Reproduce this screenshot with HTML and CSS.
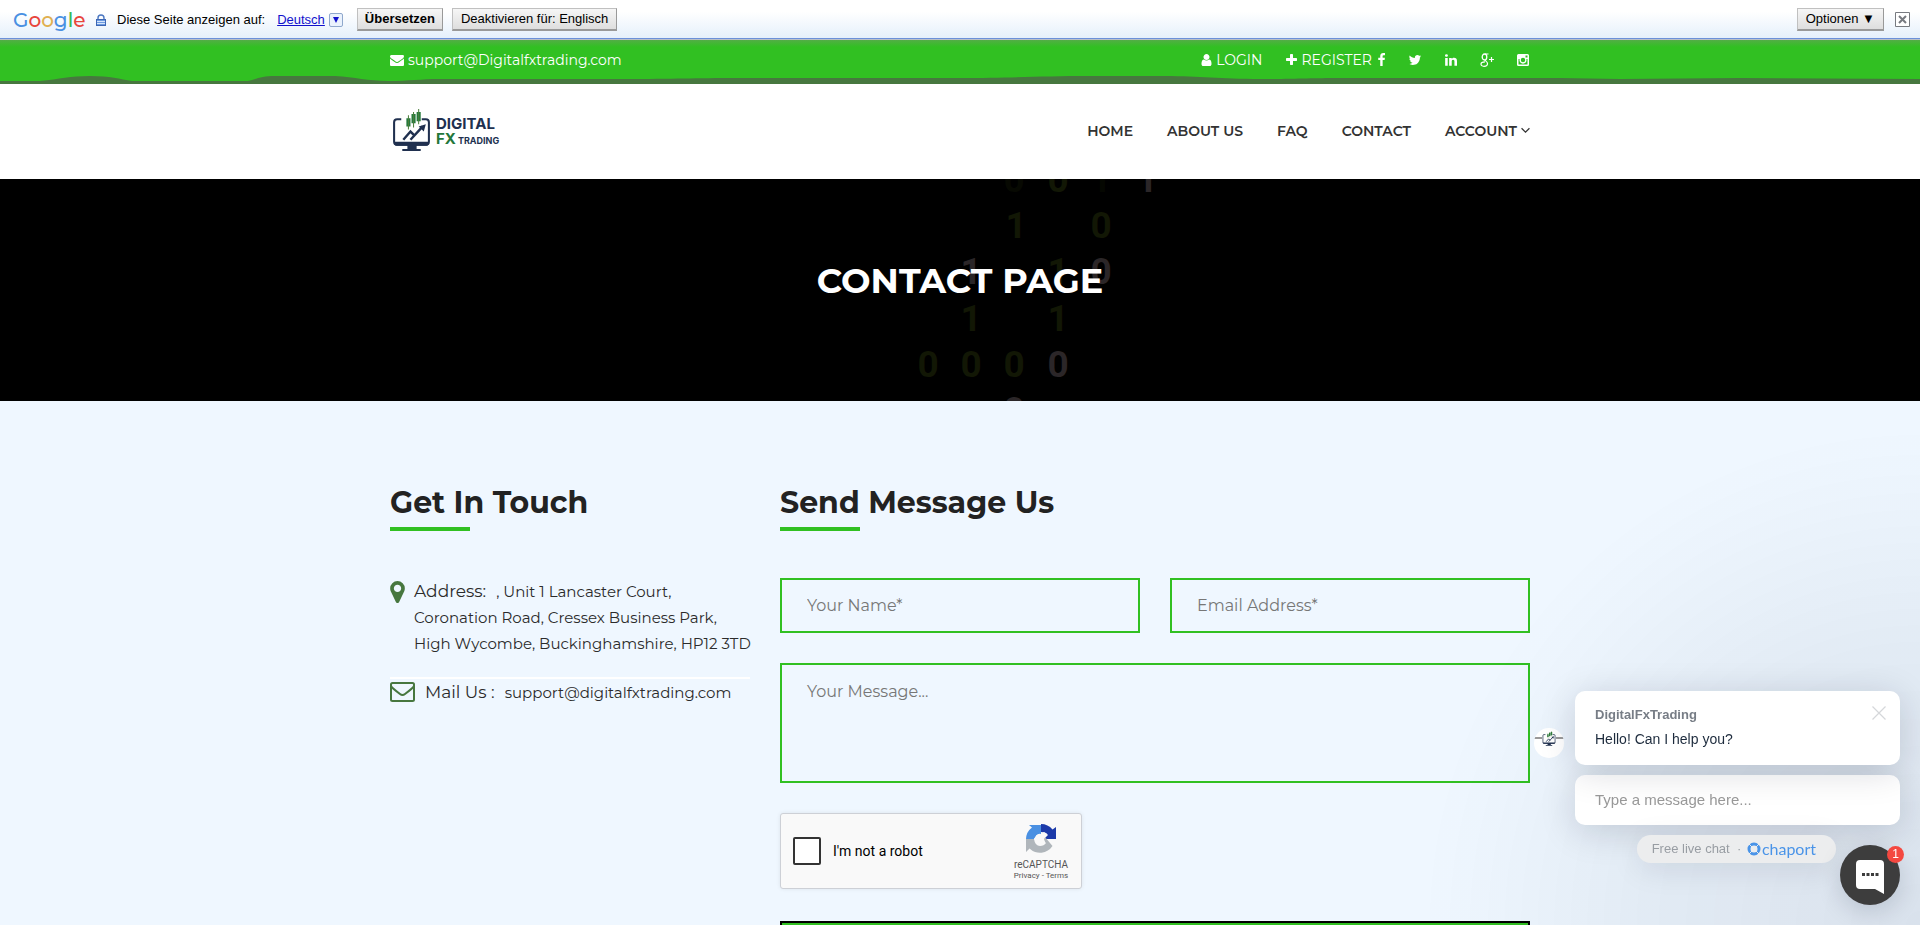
FILE: index.html
```html
<!DOCTYPE html>
<html lang="en">
<head>
<meta charset="utf-8">
<meta name="viewport" content="width=device-width, initial-scale=1">
<title>Contact - Digital FX Trading</title>
<link rel="stylesheet" href="styles.css">
</head>
<body>
<svg class="defs" aria-hidden="true">
  <symbol id="monitor" viewBox="0 0 38 42">
    <path d="M9 10H5a3 3 0 0 0-3 3v19a3 3 0 0 0 3 3h28a3 3 0 0 0 3-3V13a3 3 0 0 0-3-3h-4" fill="none" stroke="#20304f" stroke-width="2"/>
    <path d="M2 32h34v1q0 3-3 3H5q-3 0-3-3zM15 36h9v3h4v2H10v-2h5z" fill="#20304f"/>
    <path d="M11 30l7-8 4 4M18 30l12-13" fill="none" stroke="#20304f" stroke-width="2.400"/>
    <path d="M26 17l7-2-2 7z" fill="#20304f"/>
    <path d="M14 9h4v8h-4zM19 5h4v9h-4zM24 3h4v9h-4z" fill="#267a3d"/>
    <path d="M16 6v14M21 3v15M26 0v15" stroke="#4d7f3c" stroke-width="1"/>
  </symbol>
</svg>

<div class="translate">
  <span class="google" aria-label="Google"><span class="g-blue">G</span><span class="g-red">o</span><span class="g-yellow">o</span><span class="g-blue">g</span><span class="g-green">l</span><span class="g-red">e</span></span>
  <svg class="lock" viewBox="0 0 10 12"><path d="M2 6V4a3 3 0 0 1 6 0v2" fill="none" stroke="#4a76c0" stroke-width="1.400"/><rect x=".5" y="5.500" width="9" height="6" fill="#6d9be0" stroke="#3c66b4"/><path d="M1 7.500h8M1 9.500h8" stroke="#d5e4fb"/></svg>
  <span class="translate-label">Diese Seite anzeigen auf:</span>
  <a class="lang" href="#">Deutsch</a>
  <button class="lang-arrow" aria-label="Sprache"><svg viewBox="0 0 8 8"><path d="M1 1h6L4 7z" fill="#11c"/></svg></button>
  <button class="tbtn tbtn-main">Übersetzen</button>
  <button class="tbtn">Deaktivieren für: Englisch</button>
  <button class="tbtn tbtn-options">Optionen ▼</button>
  <button class="tclose" aria-label="Schließen"><svg viewBox="0 0 15 15"><path d="M.5.5h14v14H.5z" fill="#fff" stroke="#777a80"/><path d="M4 4l7 7M11 4l-7 7" stroke="#777a80" stroke-width="2"/></svg></button>
</div>

<div class="topbar">
  <svg class="wave" viewBox="0 0 1920 10" preserveAspectRatio="none"><path d="M0 7H40C60 5 70 2 90 2S120 5 132 7H248C256 5 262 2 275 2H335C355 3 368 7 388 7C410 7 420 5 440 5H620C680 5 690 4 740 4H960C1010 4 1040 2 1090 2H1165C1200 2 1220 5 1260 5C1300 5 1310 4 1340 4H1560L1620 5L1740 4L1920 5V10H0Z" fill="#47773f"/></svg>
  <div class="container topbar-row">
    <a class="top-link" href="#"><svg class="fa" viewBox="0 0 1792 1792"><path d="M1792 710v794q0 66-47 113t-113 47h-1472q-66 0-113-47t-47-113v-794q44 49 101 87 362 246 497 345 57 42 92.500 65.500t94.500 48 110 24.500h2q51 0 110-24.500t94.500-48 92.500-65.500q170-123 498-345 57-39 100-87zm0-294q0 79-49 151t-122 123q-376 261-468 325-10 7-42.500 31t-54 38.500-52 32.500-57.500 27-50 9h-2q-23 0-50-9t-57.500-27-52-32.500-54-38.500-42.500-31q-91-64-262-182.500t-205-142.500q-62-42-117-115.500t-55-136.500q0-78 41.500-130t118.500-52h1472q65 0 112.500 47t47.500 113z"/></svg>support@Digitalfxtrading.com</a>
    <div class="top-right">
      <a class="top-link login" href="#"><svg class="fa narrow" viewBox="192 0 1408 1792"><path d="M1536 1399q0 109-62.500 187t-150.500 78h-854q-88 0-150.500-78t-62.500-187q0-85 8.500-160.500t31.500-152 58.500-131 94-89 134.500-34.500q131 128 313 128t313-128q76 0 134.500 34.500t94 89 58.500 131 31.500 152 8.500 160.500zm-256-887q0 159-112.500 271.500t-271.500 112.500-271.500-112.500-112.500-271.500 112.500-271.500 271.500-112.500 271.500 112.500 112.500 271.500z"/></svg>LOGIN</a>
      <a class="top-link" href="#"><svg class="fa narrow" viewBox="192 0 1408 1792"><path d="M1600 736v192q0 40-28 68t-68 28h-416v416q0 40-28 68t-68 28h-192q-40 0-68-28t-28-68v-416h-416q-40 0-68-28t-28-68v-192q0-40 28-68t68-28h416v-416q0-40 28-68t68-28h192q40 0 68 28t28 68v416h416q40 0 68 28t28 68z"/></svg>REGISTER</a>
      <div class="social">
        <a href="#" aria-label="Facebook"><svg class="fa fb" viewBox="384 0 1024 1792"><path d="M1343 12v264h-157q-86 0-116 36t-30 108v189h293l-39 296h-254v759h-306v-759h-255v-296h255v-218q0-186 104-288.500t277-102.500q147 0 228 12z"/></svg></a>
        <a href="#" aria-label="Twitter"><svg class="fa" viewBox="0 0 1792 1792"><path d="M1684 408q-67 98-162 167 1 14 1 42 0 130-38 259.500t-115.500 248.500-184.500 210.500-258 146-323 54.500q-271 0-496-145 35 4 78 4 225 0 401-138-105-2-188-64.500t-114-159.500q33 5 61 5 43 0 85-11-112-23-185.500-111.500t-73.500-205.500v-4q68 38 146 41-66-44-105-115t-39-154q0-88 44-163 121 149 294.500 238.500t371.500 99.500q-8-38-8-74 0-134 94.500-228.500t228.500-94.500q140 0 236 102 109-21 205-78-37 115-142 178 93-10 186-50z"/></svg></a>
        <a href="#" aria-label="LinkedIn"><svg class="fa" viewBox="0 0 1792 1792"><path d="M477 625v991h-330v-991h330zm21-306q1 73-50.500 122t-135.500 49h-2q-82 0-132-49t-50-122q0-74 51.500-122.500t134.500-48.500 133 48.500 51 122.500zm1166 729v568h-329v-530q0-105-40.500-164.500t-126.500-59.500q-63 0-105.500 34.500t-63.500 85.500q-11 30-11 81v553h-329q2-399 2-647t-1-296l-1-48h329v144h-2q20-32 41-56t56.500-52 87-43.500 114.500-15.500q171 0 275 113.500t104 332.500z"/></svg></a>
        <a href="#" aria-label="Google Plus"><svg class="fa" viewBox="0 0 14 14"><g fill="none" stroke="#fff"><ellipse cx="4.500" cy="4" rx="2.300" ry="3" stroke-width="1.300"/><path d="M5 1h3.500M5 7c0 1 2.500 1.500 2.500 3.500S6 13.300 4 13.300 1 12.300 1 11s1.500-2.200 4-2.200" stroke-width="1.200"/><path d="M11.500 4v5M9 6.500h5" stroke-width="1.200"/></g></svg></a>
        <a href="#" aria-label="Instagram"><svg class="fa" viewBox="0 0 14 14"><path fill-rule="evenodd" d="M2.500 1h9A1.500 1.500 0 0 1 13 2.500v9a1.500 1.500 0 0 1-1.500 1.500h-9A1.500 1.500 0 0 1 1 11.500v-9A1.500 1.500 0 0 1 2.500 1zM9.500 2.500v2h2v-2zM2.500 6v5.500h9V6h-1.200a3.500 3.500 0 1 1-6.600 0zM7 4.800a2.200 2.200 0 1 0 0 4.400 2.200 2.200 0 0 0 0-4.400z"/></svg></a>
      </div>
    </div>
  </div>
</div>

<header class="header">
  <div class="container header-row">
    <a class="brand" href="#" aria-label="Digital FX Trading">
      <svg class="brand-mark"><use href="#monitor"/></svg>
      <span class="brand-text"><span class="brand-top">DIGITAL</span><span class="brand-bottom"><span class="brand-fx">FX</span><span class="brand-sub">TRADING</span></span></span>
    </a>
    <nav class="nav">
      <a href="#">HOME</a><a href="#">ABOUT US</a><a href="#">FAQ</a><a href="#">CONTACT</a>
      <a href="#">ACCOUNT <svg class="chev" viewBox="0 0 8 6"><path d="M.5 1L4 4.500 7.500 1" fill="none" stroke="#333" stroke-width="1.100"/></svg></a>
    </nav>
  </div>
</header>

<section class="hero">
  <svg class="digits" viewBox="0 0 1920 222" preserveAspectRatio="xMidYMid slice" aria-hidden="true">
    <g class="dim"><text x="1014" y="13" opacity=".4">0</text><text x="1058" y="13">0</text><text x="1101" y="13" opacity=".3">1</text><text x="1016" y="59">1</text><text x="1101" y="59">0</text><text x="1058" y="105">1</text><text x="971" y="152">1</text><text x="1058" y="152">1</text><text x="928" y="198">0</text><text x="971" y="198">0</text><text x="1014" y="198">0</text></g>
    <g class="lit"><text x="1147" y="13">1</text><text x="971" y="105">1</text><text x="1101" y="105">0</text><text x="1058" y="198">0</text><text x="1014" y="244">0</text></g>
  </svg>
  <h1>CONTACT PAGE</h1>
</section>

<main class="container contact">
  <section class="touch">
    <h2>Get In Touch</h2>
    <div class="item">
      <svg class="pin" viewBox="384 128 1024 1536"><path d="M1152 640q0-106-75-181t-181-75-181 75-75 181 75 181 181 75 181-75 75-181zm256 0q0 109-33 179l-364 774q-16 33-47.500 52t-67.500 19-67.500-19-46.500-52l-365-774q-33-70-33-179 0-212 150-362t362-150 362 150 150 362z"/></svg>
      <p><span class="item-label">Address:</span>, Unit 1 Lancaster Court,<br>Coronation Road, Cressex Business Park,<br>High Wycombe, Buckinghamshire, HP12 3TD</p>
    </div>
    <div class="item item-mail">
      <svg class="mail" viewBox="0 0 25 20"><rect x="1" y="1" width="23" height="18" rx="1.500"/><path d="M1 4q1 2 9 8 2.500 2 5 0 8-6 9-8"/></svg>
      <p><span class="item-label">Mail Us :</span>support@digitalfxtrading.com</p>
    </div>
  </section>

  <section>
    <h2>Send Message Us</h2>
    <form class="form">
      <input class="field" type="text" placeholder="Your Name*" aria-label="Your Name">
      <input class="field" type="email" placeholder="Email Address*" aria-label="Email Address">
      <textarea class="field field-area" placeholder="Your Message..." aria-label="Your Message"></textarea>
      <div class="captcha">
        <input class="captcha-box" type="checkbox" id="robot">
        <label for="robot">I'm not a robot</label>
        <div class="captcha-brand">
          <svg class="captcha-logo" viewBox="0 0 30 30"><path d="M0 15A15 15 0 0 1 6 3.500L3 1h12v9q-3-1-4.500 1.500L8 15z" fill="#4a90e2"/><path d="M15 0q7 0 11.500 5.500L30 3v12H18l4-4q-2-3-7-3z" fill="#1c3aa9"/><path d="M0 15h8q1 7 6 7 4 0 6-3l-4-4 3-2 7.500 9A15 15 0 0 1 3.500 24.500L0 28z" fill="#b0b6bb"/><path d="M8 15l2.500-4L15 10l3-2 3 2-3 5 1 3-4 3-3-3z" fill="#f9f9f9"/></svg>
          <span class="captcha-name">reCAPTCHA</span>
          <span class="captcha-links"><a href="#">Privacy</a> - <a href="#">Terms</a></span>
        </div>
      </div>
      <button class="send" type="submit">SEND MESSAGE</button>
    </form>
  </section>
</main>

<aside class="chat">
  <div class="chat-main">
    <div class="avatar"><svg><use href="#monitor"/></svg></div>
    <div class="bubble">
      <strong>DigitalFxTrading</strong>
      <p>Hello! Can I help you?</p>
      <button class="bubble-close" aria-label="Close"><svg viewBox="0 0 14 14"><path d="M.5.5l13 13M13.500.5L.5 13.500" stroke="#d5d7da" stroke-width="1.200"/></svg></button>
    </div>
  </div>
  <input class="chat-input" type="text" placeholder="Type a message here..." aria-label="Message">
  <div class="chat-foot">
    <a class="chaport" href="#">Free live chat &nbsp;·&nbsp; <svg class="chaport-mark" viewBox="0 0 14 14"><circle cx="7" cy="7" r="5" fill="none" stroke="#4a94e8" stroke-width="3"/><path d="M2 2l3 3M12 2L9 5M2 12l3-3M12 12L9 9" stroke="#eceded" stroke-width="1"/></svg><span class="chaport-name">chaport</span></a>
    <button class="launcher" aria-label="Open chat"><svg viewBox="0 0 28 34"><path d="M4 0h20q4 0 4 4v30l-9-5H4q-4 0-4-4V4q0-4 4-4z" fill="#fff"/><path d="M6 14.500h3M10.500 14.500h3M15 14.500h3M19.500 14.500h3" stroke="#3d3d3d" stroke-width="3"/></svg><span class="badge">1</span></button>
  </div>
</aside>
</body>
</html>
```

FILE: styles.css
```css
* { box-sizing: border-box; }
html { scrollbar-width: none; }
body {
  margin: 0;
  background: #eff7ff;
  color: #222;
  font: 15px/26px Montserrat, Inter, sans-serif;
}
a { color: inherit; text-decoration: none; }
button { cursor: pointer; font: inherit; }
h1, h2, p { margin: 0; }
svg { display: block; flex: none; }
.defs { display: none; }
.container { width: 100%; max-width: 1170px; margin: 0 auto; padding: 0 15px; }

/* Translate bar */
.translate {
  display: flex;
  align-items: center;
  height: 40px;
  padding: 0 10px 0 13px;
  background: linear-gradient(#fff 30%, #e4effb);
  border-bottom: 1px solid #b9bfc9;
  box-shadow: inset 0 -1px #6b90da;
  color: #000;
  font: 13px/16px Arial, "Liberation Sans", sans-serif;
}
.google { width: 69px; margin-right: 14px; font: 500 20px/30px Montserrat, sans-serif; }
.g-blue { color: #4a90e2; }
.g-red { color: #e8453c; }
.g-yellow { color: #e0b050; }
.g-green { color: #3cba54; }
.lock { width: 10px; height: 12px; margin-right: 11px; }
.translate-label { margin-right: 12px; }
.lang { color: #11c; text-decoration: underline; }
.lang-arrow { width: 14px; height: 14px; margin: 0 14px 0 4px; padding: 2px; border: 1px solid #8fa8cc; border-radius: 2px; background: #eaf2fd; }
.lang-arrow svg { width: 8px; height: 8px; }
.tbtn {
  height: 23px;
  margin-right: 9px;
  padding: 0 8px;
  background: linear-gradient(#f6f6f6, #dedede);
  border: 1px solid #c0c0c0;
  border-right-color: #999;
  border-bottom: 2px solid #999;
  color: #000;
  white-space: nowrap;
}
.tbtn-main { padding: 0 7px; font-weight: bold; }
.tbtn-options { margin: 0 11px 0 auto; }
.tclose { padding: 0; border: 0; background: none; }
.tclose svg { width: 15px; height: 15px; }

/* Top bar */
.topbar {
  position: relative;
  height: 44px;
  background: linear-gradient(#52ae45, #31c022 7px);
  color: #fff;
  font-size: 14px;
}
.wave { position: absolute; left: 0; bottom: 0; width: 100%; height: 10px; }
.topbar-row { display: flex; justify-content: space-between; height: 40px; align-items: center; }
.top-link { display: flex; align-items: center; gap: 4px; }
.top-right, .social { display: flex; align-items: center; }
.login { margin-right: 24px; }
.social { gap: 22px; margin-left: 5px; }
.fa { width: 14px; height: 14px; fill: #fff; }
.fa.narrow { width: 11px; }
.fa.fb { width: 9px; }

/* Header */
.header { background: #fff; }
.header-row { display: flex; justify-content: space-between; align-items: center; height: 95px; padding-bottom: 2px; }
.brand { display: flex; align-items: center; gap: 5px; padding-left: 2px; }
.brand-mark { width: 39px; height: 43px; }
.brand-text { display: flex; flex-direction: column; color: #20304f; font: bold 15px/15px Inter, sans-serif; padding-top: 2px; }
.brand-bottom { display: flex; align-items: baseline; gap: 2px; }
.brand-fx { color: #23773a; }
.brand-sub { font-size: 9px; }
.nav { display: flex; gap: 34px; color: #333; font-size: 14px; font-weight: 600; }
.nav a { display: flex; align-items: center; gap: 4px; }
.chev { width: 9px; height: 7px; }

/* Hero */
.hero { position: relative; display: flex; align-items: center; justify-content: center; height: 222px; padding-bottom: 18px; background: #000; overflow: hidden; }
.hero h1 { position: relative; color: #fff; font-size: 35px; line-height: 40px; font-weight: 700; }
.digits { position: absolute; inset: 0; width: 100%; height: 100%; font: bold 37px Roboto, sans-serif; text-anchor: middle; }
.dim { fill: #121705; }
.lit { fill: #2b2628; }

/* Contact */
.contact { display: grid; grid-template-columns: 360px 1fr; gap: 30px; padding-top: 82px; }
h2 { font-size: 30px; line-height: 40px; font-weight: 700; }
h2::after { content: ""; display: block; width: 80px; height: 4px; margin: 4px 0 47px; background: #31c022; }
.item { display: flex; gap: 9px; padding-bottom: 20px; color: #2b2b2b; white-space: nowrap; }
.item-label { margin-right: 10px; font-size: 17px; }
.pin { width: 15px; height: 22px; margin-top: 3px; fill: #47773f; }
.item-mail { gap: 10px; border-top: 2px solid #fff; }
.mail { width: 25px; height: 20px; margin-top: 3px; fill: none; stroke: #47773f; stroke-width: 2; }
.form { display: grid; grid-template-columns: 1fr 1fr; gap: 30px; }
.field {
  width: 100%;
  height: 55px;
  padding: 0 25px;
  background: transparent;
  border: 2px solid #31c022;
  border-radius: 0;
  color: #333;
  font: 16px/24px Montserrat, Inter, sans-serif;
}
.field::placeholder { color: #777; opacity: 1; }
.field-area { display: block; grid-column: 1 / -1; height: 120px; padding-top: 15px; resize: none; }
.captcha {
  display: flex;
  align-items: center;
  width: 302px;
  height: 76px;
  padding: 0 12px;
  background: #f9f9f9;
  border: 1px solid #cdd0d6;
  border-radius: 3px;
  box-shadow: 0 0 4px rgba(0, 0, 0, .08);
  color: #000;
  font: 14px/17px Roboto, sans-serif;
}
.captcha-box { appearance: none; width: 28px; height: 28px; margin: 0 12px 0 0; border: 2px solid #333; border-radius: 2px; background: #fff; }
.captcha-brand { display: flex; flex-direction: column; align-items: center; width: 58px; margin-left: auto; margin-right: -1px; padding-top: 3px; color: #555; }
.captcha-logo { width: 30px; height: 30px; margin-bottom: 4px; }
.captcha-name { font: 10px/13px Roboto, sans-serif; }
.captcha-links { font: 8px/10px Roboto, sans-serif; white-space: nowrap; }
.send { grid-column: 1 / -1; height: 55px; margin-top: 2px; border: 2px solid #000; background: #31c022; color: #fff; font-weight: 600; }

/* Chat widget */
.chat {
  position: fixed;
  right: 20px;
  bottom: 20px;
  display: flex;
  flex-direction: column;
  align-items: flex-end;
  gap: 10px;
  font: 15px/20px Arial, "Liberation Sans", sans-serif;
}
.chat::before {
  content: "";
  position: fixed;
  right: 0;
  bottom: 0;
  z-index: -1;
  width: 500px;
  height: 500px;
  background: radial-gradient(circle 500px at 100% 100%, rgba(0, 18, 46, .09), rgba(0, 18, 46, .05) 55%, rgba(0, 18, 46, .01) 88%, transparent 100%);
  pointer-events: none;
}
.chat-main { display: flex; align-items: flex-end; gap: 11px; }
.avatar { display: flex; justify-content: center; width: 30px; height: 30px; margin-bottom: 7px; padding-top: 3px; border-radius: 50%; background: linear-gradient(#fff 9px, #999 9px 11px, #fff 11px); }
.avatar svg { width: 14px; height: 15px; background: #fff; }
.bubble { position: relative; width: 325px; height: 74px; padding: 14px 20px; border-radius: 10px; background: #fff; box-shadow: 0 6px 36px rgba(0, 18, 46, .16); color: #1d2b3d; font-size: 14px; }
.bubble strong { display: block; color: #777d86; font-size: 13px; }
.bubble p { margin-top: 4px; }
.bubble-close { position: absolute; top: 15px; right: 14px; padding: 0; border: 0; background: none; }
.bubble-close svg { width: 14px; height: 14px; }
.chat-input { width: 325px; height: 50px; padding: 0 20px 2px; border: 0; border-radius: 10px; background: #fff; box-shadow: 0 6px 36px rgba(0, 18, 46, .16); font: inherit; }
.chat-input::placeholder { color: #999; opacity: 1; }
.chat-foot { display: flex; align-items: flex-start; gap: 4px; }
.chaport { display: flex; align-items: center; height: 28px; padding: 0 20px 0 15px; border-radius: 14px; background: #ecedee; color: #989da3; font-size: 13px; white-space: nowrap; box-shadow: 0 6px 30px rgba(0, 18, 46, .1); }
.chaport-mark { width: 14px; height: 14px; margin: 0 1px 0 2px; }
.chaport-name { color: #4a94e8; font: 16px/20px Lato, "Open Sans", sans-serif; }
.launcher { position: relative; display: flex; align-items: center; justify-content: center; width: 60px; height: 60px; margin-top: 10px; padding: 4px 0 0; border: 0; border-radius: 50%; background: #3d3d3d; box-shadow: 0 6px 24px rgba(0, 18, 46, .16); }
.launcher svg { width: 28px; height: 34px; }
.badge { position: absolute; top: 1px; right: -4px; width: 17px; height: 17px; border-radius: 50%; background: #f44840; color: #fff; font-size: 12px; line-height: 17px; text-align: center; }
```
